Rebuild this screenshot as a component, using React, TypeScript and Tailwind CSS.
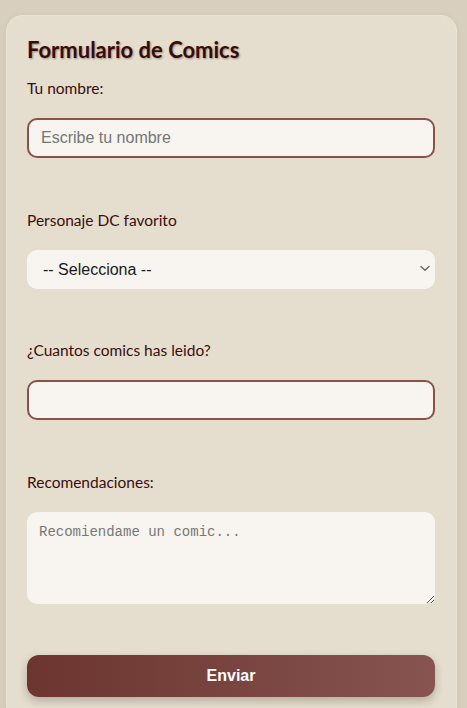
import React from "react";

export default function App() {
  return (
    <div className="min-h-[708px] w-full bg-[#d8cfbe] pt-[15px]" style={{ fontFamily: "Lato, 'Noto Sans', sans-serif" }}>
      <div className="ml-[6px] w-[451px] rounded-[16px] border border-[#ebe4d6] bg-[#e5ddcd] pl-5 pr-[21px] pt-5 pb-6 shadow-[0_2px_10px_rgba(0,0,0,0.06)]">
        <h1 className="text-[22px] font-bold leading-[28px] text-[#3a0a0a] [text-shadow:1px_1px_2px_rgba(0,0,0,0.35)]">
          Formulario de Comics
        </h1>
        <form className="mt-[14px] flex flex-col" onSubmit={(e) => e.preventDefault()}>
          <label className="block text-[15.5px] leading-5 text-[#3b0d0d]">Tu nombre:</label>
          <input
            type="text"
            placeholder="Escribe tu nombre"
            className="mt-5 h-10 w-full rounded-[10px] border-2 border-[#8a514b] bg-[#f8f5f0] px-3 text-[16px] text-[#222] outline-none placeholder:text-[#757575]"
            style={{ fontFamily: "'Liberation Sans', Arial, sans-serif" }}
          />
          <label className="mt-[52px] block text-[15.5px] leading-5 text-[#3b0d0d]">Personaje DC favorito</label>
          <div className="relative mt-5">
            <select
              className="h-[39px] w-full appearance-none rounded-[10px] border-0 bg-[#f8f5f0] pl-4 pr-8 text-[16px] text-[#1a1a1a] outline-none"
              style={{ fontFamily: "'Liberation Sans', Arial, sans-serif" }}
              defaultValue=""
            >
              <option value="">-- Selecciona --</option>
              <option>Batman</option>
              <option>Superman</option>
              <option>Wonder Woman</option>
            </select>
            <svg
              className="pointer-events-none absolute right-[5px] top-[15px]"
              width="10"
              height="7"
              viewBox="0 0 10 7"
              fill="none"
            >
              <path d="M1 1.5L5 5.2L9 1.5" stroke="#6b6b6b" strokeWidth="1.5" strokeLinecap="round" strokeLinejoin="round" />
            </svg>
          </div>
          <label className="mt-[51px] block text-[15.5px] leading-5 text-[#3b0d0d]">¿Cuantos comics has leido?</label>
          <input
            type="number"
            className="mt-5 h-10 w-full rounded-[10px] border-2 border-[#8a514b] bg-[#f8f5f0] px-3 text-[16px] outline-none"
            style={{ fontFamily: "'Liberation Sans', Arial, sans-serif" }}
          />
          <label className="mt-[52px] block text-[15.5px] leading-5 text-[#3b0d0d]">Recomendaciones:</label>
          <textarea
            placeholder="Recomiendame un comic..."
            className="mt-5 block h-[92px] w-full rounded-[10px] border-0 bg-[#f8f5f0] px-3 py-[10px] text-[14px] outline-none placeholder:text-[#777]"
            style={{ fontFamily: "'Liberation Mono', 'DejaVu Sans Mono', monospace" }}
          />
          <button
            type="submit"
            className="mt-[51px] h-[42px] w-full rounded-[12px] bg-gradient-to-r from-[#6c352f] to-[#875450] text-[16px] font-bold text-white shadow-[0_4px_10px_rgba(0,0,0,0.22)]"
            style={{ fontFamily: "'Liberation Sans', Arial, sans-serif" }}
          >
            Enviar
          </button>
        </form>
      </div>
    </div>
  );
}
